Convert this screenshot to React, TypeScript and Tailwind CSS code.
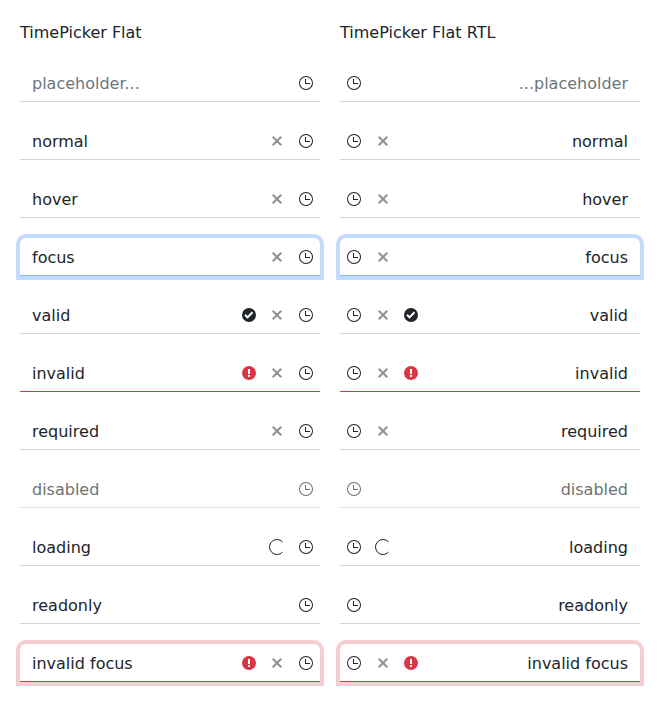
import React from "react";

type State = "normal" | "focus" | "invalid" | "disabled" | "invalidFocus";

interface Row {
  label: string;
  rtlLabel?: string;
  placeholder?: boolean;
  state?: State;
  clear?: boolean;
  valid?: boolean;
  invalid?: boolean;
  loading?: boolean;
}

const rows: Row[] = [
  { label: "placeholder...", rtlLabel: "...placeholder", placeholder: true },
  { label: "normal", clear: true },
  { label: "hover", clear: true },
  { label: "focus", clear: true, state: "focus" },
  { label: "valid", clear: true, valid: true },
  { label: "invalid", clear: true, invalid: true, state: "invalid" },
  { label: "required", clear: true },
  { label: "disabled", state: "disabled" },
  { label: "loading", loading: true },
  { label: "readonly" },
  { label: "invalid focus", clear: true, invalid: true, state: "invalidFocus" },
];

const stateClass: Record<State, string> = {
  normal: "border-[#ced4da]",
  focus: "rounded-t-md border-[#86b7fe] shadow-[0_0_0_4px_#c2dbfe]",
  invalid: "border-[#dc3545]",
  disabled: "border-[#ced4da] opacity-65",
  invalidFocus: "rounded-t-md border-[#dc3545] shadow-[0_0_0_4px_#f6cdd1]",
};

const icon = "size-4 shrink-0";

const Clock = () => (
  <svg className={icon} viewBox="0 0 512 512" fill="currentColor">
    <path d="M256 32a224 224 0 1 0 0 448 224 224 0 0 0 0-448m0 416a192 192 0 1 1 0-384 192 192 0 0 1 0 384" />
    <path d="M224 128h32v128h128v32H224z" />
  </svg>
);

const Clear = () => (
  <svg className={`${icon} opacity-50`} viewBox="0 0 512 512" fill="currentColor">
    <path d="m416 141.300-45.300-45.300L256 210.700 141.300 96 96 141.300 210.700 256 96 370.700l45.300 45.300L256 301.300 370.700 416l45.300-45.300L301.300 256z" />
  </svg>
);

const Check = () => (
  <svg className={icon} viewBox="0 0 512 512" fill="currentColor">
    <path d="M256 32a224 224 0 1 0 0 448 224 224 0 0 0 0-448m-48 342.600L105.400 272l45.300-45.300 57.300 57.400 137.400-137.400 45.300 45.300z" />
  </svg>
);

const Exclamation = () => (
  <svg className={`${icon} text-[#dc3545]`} viewBox="0 0 512 512" fill="currentColor">
    <path d="M256 32a224 224 0 1 0 0 448 224 224 0 0 0 0-448m32 352h-64v-64h64zm0-96h-64V128h64z" />
  </svg>
);

const Spinner = () => (
  <svg className={icon} viewBox="0 0 16 16" fill="none" stroke="currentColor">
    <path d="M13.500 2.900A7.500 7.500 0 1 0 13.500 13.100" />
  </svg>
);

function Picker({ row, rtl }: { row: Row; rtl: boolean }) {
  return (
    <div className={`flex h-[38px] items-center border-b pe-1.5 ps-3 ${stateClass[row.state ?? "normal"]}`}>
      <span className={`min-w-0 flex-1 pt-0.5 ${row.placeholder ? "text-[#6c757d]" : ""}`}>
        <bdi dir="ltr">{rtl && row.rtlLabel ? row.rtlLabel : row.label}</bdi>
      </span>
      <div className="flex items-center gap-3">
        {row.valid && <Check />}
        {row.invalid && <Exclamation />}
        {row.clear && <Clear />}
        {row.loading && <Spinner />}
      </div>
      <div className="ms-[13px]">
        <Clock />
      </div>
    </div>
  );
}

function Column({ title, rtl = false }: { title: string; rtl?: boolean }) {
  return (
    <section className="w-[300px]">
      <h2 className="mb-5 h-6 leading-[26px]">{title}</h2>
      <div dir={rtl ? "rtl" : "ltr"} className="flex flex-col gap-5">
        {rows.map((row) => (
          <Picker key={row.label} row={row} rtl={rtl} />
        ))}
      </div>
    </section>
  );
}

export default function App() {
  return (
    <main className="flex h-[702px] gap-5 bg-white p-5 font-['DejaVu_Sans',sans-serif] text-base leading-6 text-[#212529]">
      <Column title="TimePicker Flat" />
      <Column title="TimePicker Flat RTL" rtl />
    </main>
  );
}
